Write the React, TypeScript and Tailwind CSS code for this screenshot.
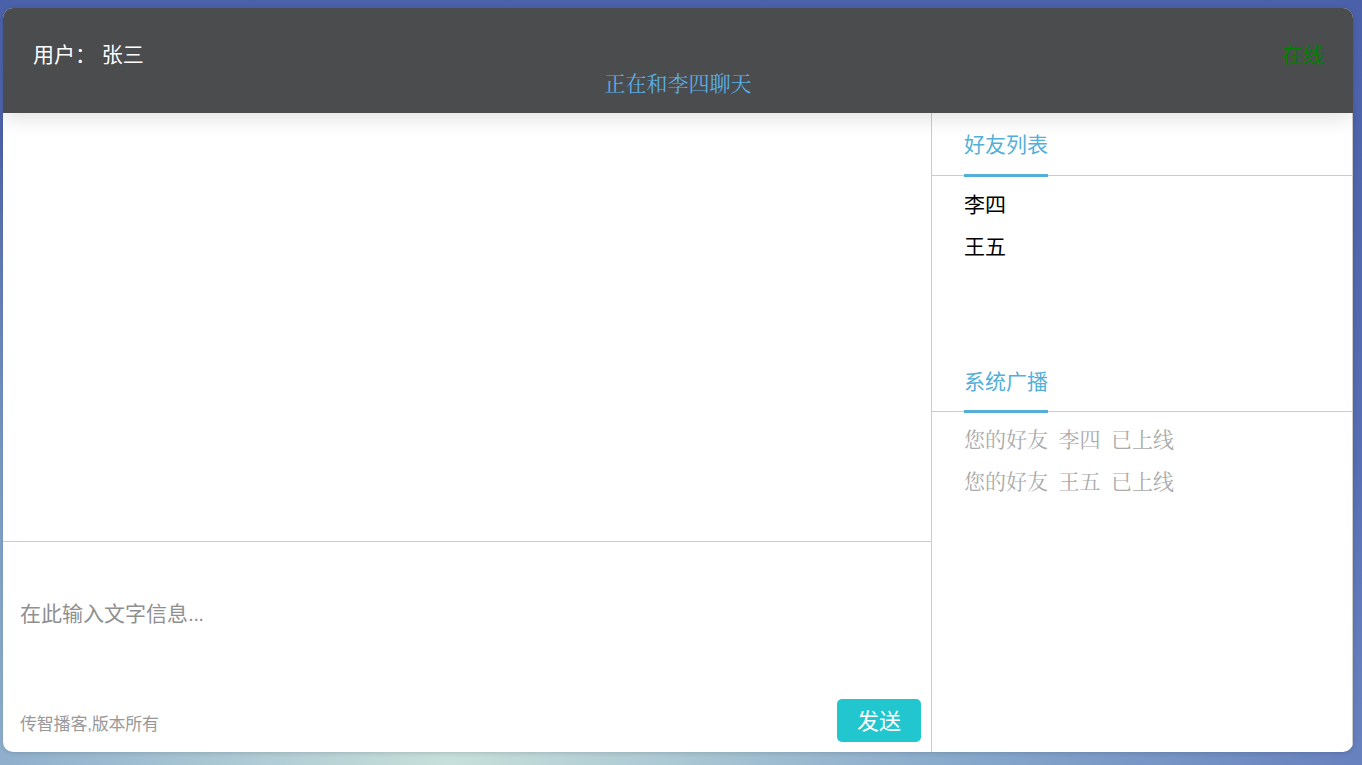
export default function App() {
  const font = "font-['Liberation_Sans','Noto_Sans_CJK_SC',sans-serif]";
  return (
    <div className={`h-[765px] w-full overflow-hidden pt-2 pl-[3px] ${font} bg-[radial-gradient(ellipse_1000px_700px_at_33%_100%,#c8e0da_0%,rgba(140,175,205,0.9)_50%,rgba(140,175,205,0)_100%),linear-gradient(180deg,#4a60a8,#6078bc)]`}>
      <div className="flex h-[744px] w-[1350px] flex-col overflow-hidden rounded-[10px] bg-white shadow-[0_1px_5px_rgba(0,0,0,0.15)]">
        <header className="relative z-10 h-[105px] shrink-0 bg-[#4b4c4e] text-[21px] leading-[28px] shadow-[0_5px_20px_rgba(0,0,0,0.12)]">
          <div className="flex items-center justify-between pt-[33px] pr-[29px] pl-[30px]">
            <span className="text-white">用户：&nbsp;张三</span>
            <span className="text-[#008000]">在线</span>
          </div>
          <div className="mt-[1px] text-center font-['Liberation_Serif','Noto_Serif_CJK_SC','Noto_Sans_CJK_SC',serif] text-[#5aaee6]">正在和李四聊天</div>
        </header>
        <div className="flex min-h-0 flex-1">
          <main className="flex w-[928px] flex-col">
            <div className="h-[429px] shrink-0 border-b border-[#cccccc]" />
            <div className="flex flex-1 flex-col pl-[17px]">
              <div className="pt-[58px] text-[21px] leading-[28px] text-[#8f8f8f]">
                在此输入文字信息<span className="tracking-[-0.7px]">...</span>
              </div>
              <div className="mt-auto flex items-start justify-between pr-[10px] pb-[10px]">
                <span className="mt-[14px] text-[17px] leading-[24px] tracking-[-0.2px] text-[#999999]">传智播客,版本所有</span>
                <button className="h-[43px] w-[84px] rounded-[5px] bg-[#22c6cf] pt-[1px] text-[22px] text-white">发送</button>
              </div>
            </div>
          </main>
          <aside className="w-[422px] border-x border-[#cccccc] text-[21px]">
            <section className="h-[236px]">
              <div className="h-[63px] border-b border-[#cccccc] pl-8">
                <div className="h-[64px] w-[84px] border-b-[3px] border-[#54b0d8] pt-[18px] leading-[28px] text-[#54b0d8]">好友列表</div>
              </div>
              <ul className="pt-[15px] pl-8 leading-[28px] text-black">
                <li className="mb-[14px]">李四</li>
                <li>王五</li>
              </ul>
            </section>
            <section>
              <div className="h-[63px] border-b border-[#cccccc] pl-8">
                <div className="h-[64px] w-[84px] border-b-[3px] border-[#54b0d8] pt-[19px] leading-[28px] text-[#54b0d8]">系统广播</div>
              </div>
              <ul className="pt-[14px] pl-8 font-['Liberation_Serif','Noto_Serif_CJK_SC','Noto_Sans_CJK_SC',serif] leading-[28px] text-[#aaaaaa]">
                <li className="mb-[14px] whitespace-pre">您的好友  李四  已上线</li>
                <li className="whitespace-pre">您的好友  王五  已上线</li>
              </ul>
            </section>
          </aside>
        </div>
      </div>
    </div>
  );
}
